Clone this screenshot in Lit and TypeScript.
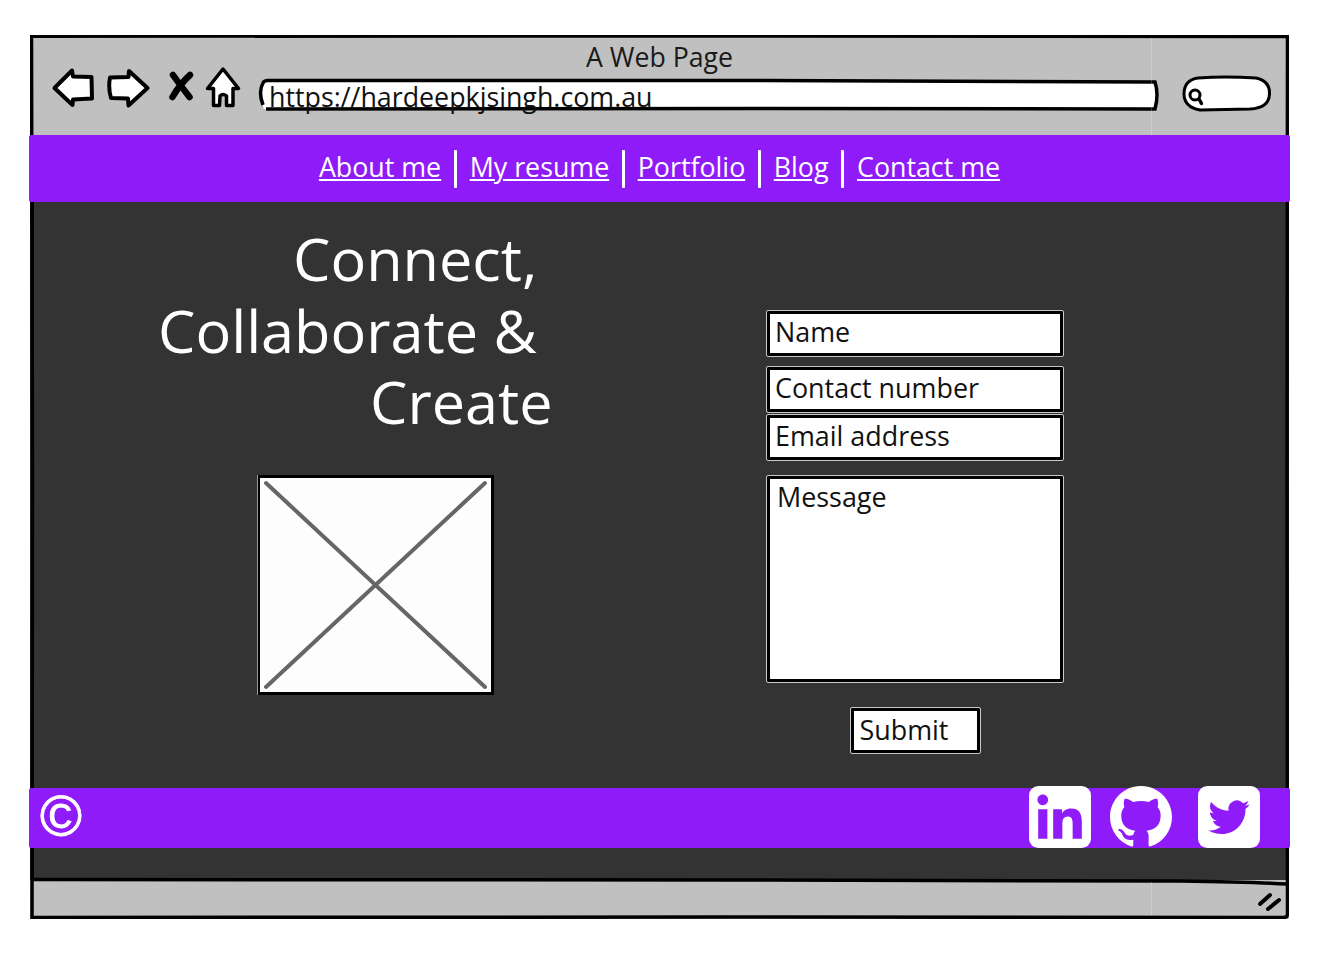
import { LitElement, html, css, svg } from 'lit';
import { customElement } from 'lit/decorators.js';

const navLinks = ['About me', 'My resume', 'Portfolio', 'Blog', 'Contact me'];

// hand drawn window outline, coordinates are relative to the window box
const frame = svg`
  <path d="M1.5 1.2 L600 1 L1257.5 1.5 L1257 440 L1257.5 879 Q1257.5 882.5 1254 882.5 L700 882 L2 882.5 L2.5 440 Z" fill="none" stroke="#000" stroke-width="3.5"/>
  <path d="M3 167 V844" fill="none" stroke="#000" stroke-width="2"/>
  <path d="M2 844.5 L700 845 L1150 846 Q1220 847 1257 849" fill="none" stroke="#000" stroke-width="3.5"/>
  <path d="M1121.5 3 V100 M1121.5 847 V881" stroke="#fff" stroke-opacity=".22" stroke-width="1"/>
`;

@customElement('app-root')
export class AppRoot extends LitElement {
  static styles = css`
    :host {
      display: block;
      padding: 35px 0 0 30px;
      font-family: 'Open Sans', 'Noto Sans', sans-serif;
      color: #111;
    }

    .window {
      position: relative;
      width: 1259px;
      height: 884px;
      display: flex;
      flex-direction: column;
      background: #c0c0c0;
    }

    .frame {
      position: absolute;
      inset: 0;
      width: 1259px;
      height: 884px;
      pointer-events: none;
    }

    .chrome {
      height: 100px;
      display: flex;
      flex-direction: column;
    }

    .title {
      margin-top: 6px;
      height: 30px;
      line-height: 32px;
      font-size: 26.7px;
      text-align: center;
      color: #1a1a1a;
    }

    .toolbar {
      margin-top: -5px;
      height: 48px;
      padding-left: 20px;
      display: flex;
      align-items: flex-start;
    }

    .tool {
      display: block;
      flex: none;
      height: 44px;
    }

    .tool.back { width: 46px; }
    .tool.forward { width: 46px; margin-left: 10px; }
    .tool.stop { width: 30px; margin-left: 14px; }
    .tool.home { width: 38px; margin-left: 8px; }

    .address {
      position: relative;
      flex: none;
      width: 903px;
      height: 34px;
      margin: 12px 0 0 16px;
      font-size: 26.8px;
      line-height: 37px;
      white-space: nowrap;
    }

    .address svg {
      position: absolute;
      inset: 0;
      width: 903px;
      height: 34px;
    }

    .address span {
      position: relative;
      margin-left: 11px;
      color: #111;
    }

    .search {
      flex: none;
      width: 92px;
      height: 40px;
      margin: 8px 0 0 20px;
    }

    nav {
      position: relative;
      z-index: 1;
      height: 67px;
      margin: 0 -1px;
      display: flex;
      align-items: center;
      justify-content: center;
      gap: 12.75px;
      background: #8f1cf8;
      border-radius: 2px;
    }

    nav a {
      color: #fff;
      font-size: 26.8px;
      line-height: 38px;
      margin-top: -3px;
    }

    nav i {
      display: block;
      width: 3px;
      height: 38px;
      background: #fff;
      border-radius: 1px;
    }

    main {
      height: 678px;
      display: flex;
      flex-direction: column;
      background: #333;
    }

    .content {
      height: 586px;
      display: grid;
      grid-template-columns: 736px 298px;
    }

    h1 {
      margin: 21px 0 0;
      font-size: 59.4px;
      font-weight: 400;
      line-height: 71.5px;
      color: #fff;
    }

    h1 span { display: block; }
    h1 .connect { padding-left: 263px; }
    h1 .collaborate { padding-left: 128px; }
    h1 .create { padding-left: 340px; }

    .placeholder {
      display: block;
      box-sizing: border-box;
      width: 236px;
      height: 220px;
      margin: 37px 0 0 228px;
      background: #fdfdfd;
      border: solid #000;
      border-width: 3px 3px 3px 2px;
      box-shadow: -1px 0 0 #999;
    }

    form {
      padding-top: 108px;
      display: flex;
      flex-direction: column;
    }

    input,
    textarea,
    button {
      display: block;
      box-sizing: border-box;
      width: 296px;
      margin: 1px;
      font: inherit;
      font-size: 26.9px;
      color: #111;
      background: #fff;
      border: 3px solid #000;
      border-radius: 1px;
      outline: 1px solid #c8c8c8;
      padding: 0 0 0 5px;
    }

    input::placeholder,
    textarea::placeholder {
      color: #111;
      opacity: 1;
    }

    input { height: 45px; padding-bottom: 5px; }
    .name { margin-bottom: 10px; }
    .phone { margin-bottom: 2px; }
    .email { margin-bottom: 15px; }

    textarea {
      height: 206px;
      padding: 0 0 0 7px;
      resize: none;
      line-height: 35px;
    }

    button {
      align-self: center;
      width: 129px;
      height: 45px;
      margin-top: 25px;
      padding: 0 0 7px 6px;
      text-align: left;
    }

    footer {
      position: relative;
      z-index: 1;
      height: 60px;
      margin: 0 -1px;
      padding: 0 30px 0 11px;
      display: flex;
      align-items: flex-start;
      justify-content: space-between;
      background: #8f1cf8;
      border-radius: 2px;
    }

    .copy {
      font-family: 'Liberation Sans', sans-serif;
      font-size: 57px;
      line-height: 57px;
      color: #fff;
      -webkit-text-stroke: 0.9px #fff;
    }

    .social {
      display: flex;
      gap: 19px;
      margin-top: -2px;
    }

    .social svg {
      display: block;
      width: 62px;
      height: 62px;
    }

    .social .twitter { margin-left: 7px; }

    .status {
      flex: 1;
      display: flex;
      justify-content: flex-end;
      align-items: flex-start;
    }

    .grip {
      width: 24px;
      height: 20px;
      margin: 12px 7px 0 0;
    }
  `;

  render() {
    return html`
      <div class="window">
        <div class="chrome">
          <div class="title">A Web Page</div>
          <div class="toolbar">
            <svg class="tool back" viewBox="50 66 46 44" fill="#fff" stroke="#000" stroke-width="4" stroke-linejoin="round">
              <path d="M54.5 88 L72 70.5 L73 76.5 L91.5 77 L92 98.5 L73 99.5 L72.5 105 Z" />
            </svg>
            <svg class="tool forward" viewBox="106 66 46 44" fill="#fff" stroke="#000" stroke-width="4" stroke-linejoin="round">
              <path d="M147.5 88 L129 71 L128.5 77 L110 77.5 Q108 88 111 98 L128 98.5 L128.5 105.5 Z" />
            </svg>
            <svg class="tool stop" viewBox="166 66 30 44" fill="none" stroke="#000" stroke-width="6.5" stroke-linecap="round">
              <path d="M173 75 Q180 85 189.5 97 M190 75 Q180 84 172.5 97" />
            </svg>
            <svg class="tool home" viewBox="204 66 38 44" fill="#fff" stroke="#000" stroke-width="3.5" stroke-linejoin="round">
              <path d="M223 69 L238.5 88.5 L233 88.5 L233 105.5 L226.5 105.5 L226.5 96 Q223 93 220 96 L219.5 105.5 L213.5 105.5 L213.5 88.5 L207.5 88.5 Z" />
            </svg>
            <div class="address">
              <svg viewBox="0 0 903 34">
                <path d="M6 2.5 L500 2.5 L897 4 Q901 16 898 31 L500 30.5 L6 31 Q-1 16 6 2.5 Z" fill="#fff" />
                <path d="M5 27 Q0 14 5 5 Q6 2.5 10 2.5 L500 2.5 L897 4 Q901 16 897 31 L500 30.5 L8 31" fill="none" stroke="#000" stroke-width="3.5" />
              </svg>
              <span>https://hardeepkjsingh.com.au</span>
            </div>
            <svg class="search" viewBox="1181 74 92 40" fill="#fff" stroke="#000" stroke-linecap="round">
              <path d="M1198 78 Q1225 76 1256 78 Q1270 81 1269.5 94 Q1269 108 1250 109 L1200 110 Q1184 107 1184 94 Q1184 80 1198 78 Z" stroke-width="3" />
              <circle cx="1195" cy="95" r="5" fill="none" stroke-width="3" />
              <path d="M1199 99 L1201.5 103.5" stroke-width="3.5" />
            </svg>
          </div>
        </div>

        <nav>
          ${navLinks.map(
            (link, i) => html`${i > 0 ? html`<i></i>` : ''}<a href="#">${link}</a>`,
          )}
        </nav>

        <main>
          <div class="content">
            <section>
              <h1>
                <span class="connect">Connect,</span>
                <span class="collaborate">Collaborate &amp;</span>
                <span class="create">Create</span>
              </h1>
              <svg class="placeholder" viewBox="0 0 231 214" fill="none" stroke="#666" stroke-width="4" stroke-linecap="round">
                <path d="M6 5 L225 209 M225 5 L6 209" />
              </svg>
            </section>
            <form>
              <input class="name" placeholder="Name" />
              <input class="phone" placeholder="Contact number" />
              <input class="email" placeholder="Email address" />
              <textarea placeholder="Message"></textarea>
              <button type="button">Submit</button>
            </form>
          </div>

          <footer>
            <span class="copy">©</span>
            <div class="social">
              <svg viewBox="0 0 24 24">
                <rect width="24" height="24" rx="3.6" fill="#fff" />
                <path fill="#8f1cf8" d="M20.447 20.452h-3.554v-5.569c0-1.328-.027-3.037-1.852-3.037-1.853 0-2.136 1.445-2.136 3.345v5.261h-3.554V9h3.414v1.561h.046c.477-.9 1.637-1.85 3.37-1.85 3.601 0 4.267 2.37 4.267 5.455v6.286zM5.337 7.433c-1.144 0-2.063-.926-2.063-2.065 0-1.138.92-2.063 2.063-2.063 1.14 0 2.064.925 2.064 2.063 0 1.139-.925 2.065-2.064 2.065zm1.782 13.019H3.555V9h3.564v11.452z" />
              </svg>
              <svg viewBox="0 .3 24 24">
                <path fill="#fff" d="M12 .297c-6.63 0-12 5.373-12 12 0 5.303 3.438 9.8 8.205 11.385.6.113.82-.258.82-.577 0-.285-.01-1.04-.015-2.04-3.338.724-4.042-1.61-4.042-1.61C4.422 18.07 3.633 17.7 3.633 17.7c-1.087-.744.084-.729.084-.729 1.205.084 1.838 1.236 1.838 1.236 1.07 1.835 2.809 1.305 3.495.998.108-.776.417-1.305.76-1.605-2.665-.3-5.466-1.332-5.466-5.93 0-1.31.465-2.38 1.235-3.22-.135-.303-.54-1.523.105-3.176 0 0 1.005-.322 3.3 1.23.96-.267 1.98-.399 3-.405 1.02.006 2.04.138 3 .405 2.28-1.552 3.285-1.23 3.285-1.23.645 1.653.24 2.873.12 3.176.765.84 1.23 1.91 1.23 3.22 0 4.61-2.805 5.625-5.475 5.92.42.36.81 1.096.81 2.22 0 1.606-.015 2.896-.015 3.286 0 .315.21.69.825.57C20.565 22.092 24 17.592 24 12.297c0-6.627-5.373-12-12-12" />
              </svg>
              <svg class="twitter" viewBox="0 0 24 24">
                <rect width="24" height="24" rx="3.6" fill="#fff" />
                <g transform="translate(4 4.1) scale(.667)">
                  <path fill="#8f1cf8" d="M23.953 4.57a10 10 0 01-2.825.775 4.958 4.958 0 002.163-2.723c-.951.555-2.005.959-3.127 1.184a4.92 4.92 0 00-8.384 4.482C7.69 8.095 4.067 6.13 1.64 3.162a4.822 4.822 0 00-.666 2.475c0 1.71.87 3.213 2.188 4.096a4.904 4.904 0 01-2.228-.616v.06a4.923 4.923 0 003.946 4.827 4.996 4.996 0 01-2.212.085 4.936 4.936 0 004.604 3.417 9.867 9.867 0 01-6.102 2.105c-.39 0-.779-.023-1.17-.067a13.995 13.995 0 007.557 2.209c9.053 0 13.998-7.496 13.998-13.985 0-.21 0-.42-.015-.63A9.935 9.935 0 0024 4.59z" />
                </g>
              </svg>
            </div>
          </footer>
        </main>

        <div class="status">
          <svg class="grip" viewBox="0 0 24 20" fill="none" stroke="#000" stroke-width="4" stroke-linecap="round">
            <path d="M2 12 L12 3 M10 17 L21 8" />
          </svg>
        </div>

        <svg class="frame" viewBox="0 0 1259 884">${frame}</svg>
      </div>
    `;
  }
}
